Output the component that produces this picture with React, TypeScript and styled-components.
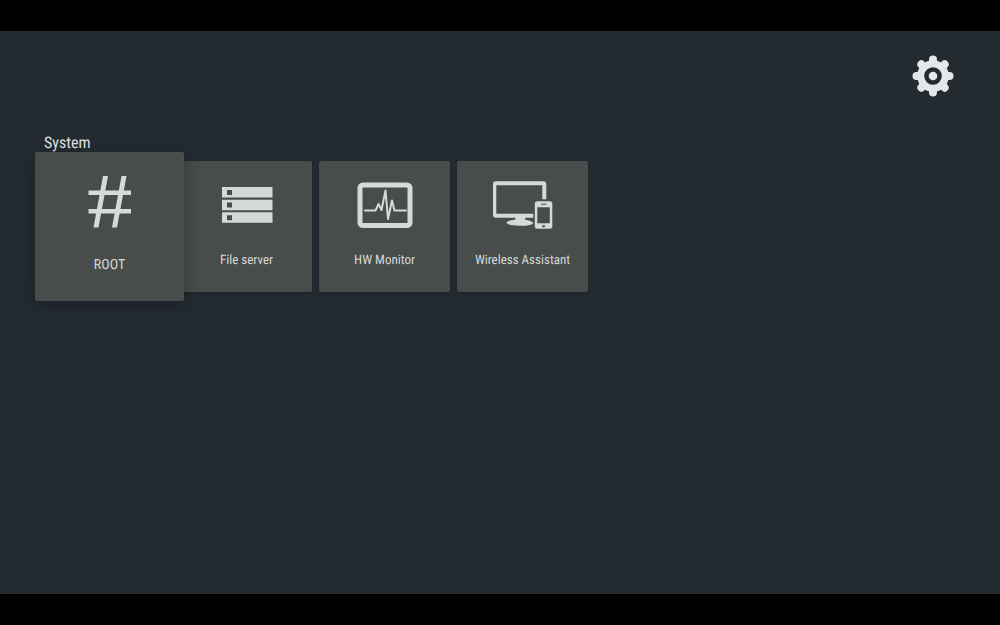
import React from "react";
import styled, { createGlobalStyle } from "styled-components";

const GlobalStyle = createGlobalStyle`
  * { box-sizing: border-box; }
  html, body, #root { height: 100%; }
  body {
    margin: 0;
    background: #000;
    color: #d8dada;
    font-family: "Roboto Condensed", Roboto, sans-serif;
    text-rendering: geometricPrecision;
  }
`;

const Page = styled.div`
  display: flex;
  min-height: 100%;
  padding: 31px 0;
`;

const Screen = styled.main`
  flex: 1;
  background: #232b31;
`;

const TopBar = styled.header`
  display: flex;
  justify-content: flex-end;
  height: 101px;
  padding: 24px 46px 0;
`;

const SettingsButton = styled.button`
  width: 42px;
  height: 42px;
  padding: 0;
  border: 0;
  background: none;
  color: #e4e6e7;
  cursor: pointer;

  svg { display: block; }
`;

const SectionTitle = styled.h2`
  margin: 0;
  padding: 2px 0 0 44px;
  font-size: 16px;
  font-weight: 400;
  line-height: 18px;
  color: #e2e4e8;
`;

const TileRow = styled.div`
  display: flex;
  align-items: center;
  gap: 7px;
  padding-left: 35px;
`;

const Tile = styled.button<{ $focused?: boolean }>`
  display: flex;
  flex-direction: column;
  align-items: center;
  flex: none;
  width: ${(p) => (p.$focused ? 149 : 131)}px;
  height: ${(p) => (p.$focused ? 149 : 131)}px;
  margin-right: ${(p) => (p.$focused ? -10 : 0)}px;
  padding: ${(p) => (p.$focused ? 20 : 14)}px 0 0;
  gap: ${(p) => (p.$focused ? 23 : 16)}px;
  border: 0;
  border-radius: 2px;
  background: #484c4b;
  box-shadow: ${(p) =>
    p.$focused ? "0 4px 18px rgba(0, 0, 0, 0.3)" : "0 1px 3px rgba(0, 0, 0, 0.2)"};
  z-index: ${(p) => (p.$focused ? 1 : 0)};
  color: #d5d9d8;
  font-family: inherit;
  text-rendering: inherit;
  font-size: ${(p) => (p.$focused ? 14 : 13)}px;
  line-height: 20px;
  white-space: nowrap;
  cursor: pointer;

  svg { display: block; flex: none; }
`;

const GearIcon = () => (
  <svg width="42" height="42" viewBox="-21 -21 42 42" fill="none" aria-hidden="true">
    <g stroke="currentColor" strokeWidth="8" strokeLinecap="round">
      {[0, 45, 90, 135].map((angle) => (
        <path key={angle} d="M0-16.5V-14M0 14V16.5" transform={`rotate(${angle})`} />
      ))}
    </g>
    <circle r="12.3" stroke="currentColor" strokeWidth="7" />
    <circle r="4.3" fill="currentColor" />
  </svg>
);

const HashIcon = () => (
  <svg width="60" height="60" viewBox="0 0 60 60" fill="currentColor" aria-hidden="true">
    <path d="M23 4h5l-9.500 51.500h-5zM41.500 4h5l-9.500 51.500h-5z" />
    <path d="M8.500 18.500h42.500v4.500H8.500zM8.500 37h42.500v4.500H8.500z" />
  </svg>
);

const ServerIcon = () => (
  <svg width="60" height="60" viewBox="0 0 60 60" fill="currentColor" fillRule="evenodd" aria-hidden="true">
    <path d="M5 12h50.500v10.500H5zM10 15h5v5h-5zM5 24.700h50.500v10.500H5zM10 27.500h5v5h-5zM5 37.300h50.500v10.500H5zM10 40.200h5v5h-5z" />
  </svg>
);

const MonitorIcon = () => (
  <svg width="60" height="60" viewBox="0 0 60 60" fill="none" stroke="currentColor" strokeLinejoin="round" strokeLinecap="round" aria-hidden="true">
    <rect x="5" y="10" width="50" height="40.500" rx="3" strokeWidth="5" />
    <path d="M10 35.500h10.500l3-6.500 3 6 4-19.500 2.500 28.500 4-18.500 2.500 10H51" strokeWidth="2" />
  </svg>
);

const DevicesIcon = () => (
  <svg width="60" height="60" viewBox="0 0 60 60" fill="currentColor" fillRule="evenodd" aria-hidden="true">
    <g transform="translate(-0.7 0.3)">
      <path d="M3.500 6H51a3 3 0 0 1 3 3v15h-4V10H4v28.500h37v4H33v2c4 .5 7 1.500 8 3.500-2 2-7 2.500-11 2.500-7 0-14-.5-16-3 1-2 5-2.700 9-3v-2H3.700a3 3 0 0 1-3-3V9a3 3 0 0 1 3-3z" />
      <path d="M45 26h12.500a2.500 2.500 0 0 1 2.500 2.500v22.500a2.500 2.500 0 0 1-2.500 2.500H45a2.500 2.500 0 0 1-2.500-2.500V28.500A2.500 2.500 0 0 1 45 26zM45 32v16h12.500V32zM49 28.500v1h5v-1zM50 50v2h2.500v-2z" />
    </g>
  </svg>
);

const tiles = [
  { label: "ROOT", Icon: HashIcon, focused: true },
  { label: "File server", Icon: ServerIcon },
  { label: "HW Monitor", Icon: MonitorIcon },
  { label: "Wireless Assistant", Icon: DevicesIcon },
];

export default function App() {
  return (
    <>
      <GlobalStyle />
      <Page>
        <Screen>
          <TopBar>
            <SettingsButton aria-label="Settings">
              <GearIcon />
            </SettingsButton>
          </TopBar>
          <section>
            <SectionTitle>System</SectionTitle>
            <TileRow>
              {tiles.map(({ label, Icon, focused }) => (
                <Tile key={label} $focused={focused}>
                  <Icon />
                  <span>{label}</span>
                </Tile>
              ))}
            </TileRow>
          </section>
        </Screen>
      </Page>
    </>
  );
}
